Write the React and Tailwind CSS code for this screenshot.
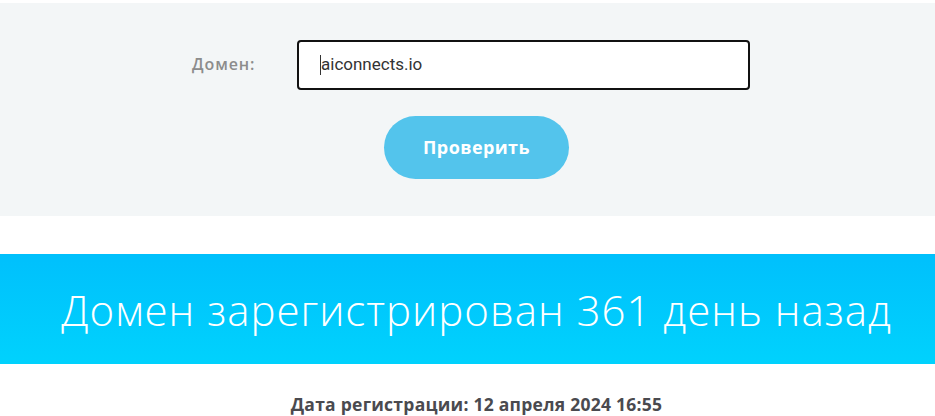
export default function App() {
  return (
    <div className="w-[935px] h-[416px] bg-white overflow-hidden" style={{ fontFamily: "'Open Sans', 'DejaVu Sans', sans-serif" }}>
      <div className="mt-[3px] h-[213px] bg-[#f3f6f7] flex flex-col items-center">
        <div className="flex items-center mt-[37px]">
          <label className="w-[105px] text-[16px] tracking-[0.9px] font-semibold text-[#8c8c8c] ml-[192px] -mt-[3px]">Домен:</label>
          <div className="w-[453px] h-[50px] border-2 border-[#111] rounded-[4px] bg-white flex items-center pl-[21px] mr-[185px]">
            <span className="w-px h-[20px] bg-[#333]"></span>
            <span className="text-[17px] text-[#333] font-['Roboto',sans-serif]">aiconnects.io</span>
          </div>
        </div>
        <button className="mt-[26px] ml-[18px] w-[185px] h-[63px] rounded-full bg-[#53c4ec] text-white text-[18px] tracking-[0.4px] font-bold">Проверить</button>
      </div>
      <div className="mt-[38px] h-[110px] bg-gradient-to-b from-[#00c0fc] to-[#00d2fd] flex items-center justify-center">
        <h1 className="text-white text-[42px] font-light ml-[18px] tracking-[1px]">Домен зарегистрирован 361 день назад</h1>
      </div>
      <div className="mt-[27px] text-center ml-[18px] text-[17.5px] tracking-[0.25px] font-bold text-[#4a4a4f]">Дата регистрации: 12 апреля 2024 16:55</div>
    </div>
  );
}
